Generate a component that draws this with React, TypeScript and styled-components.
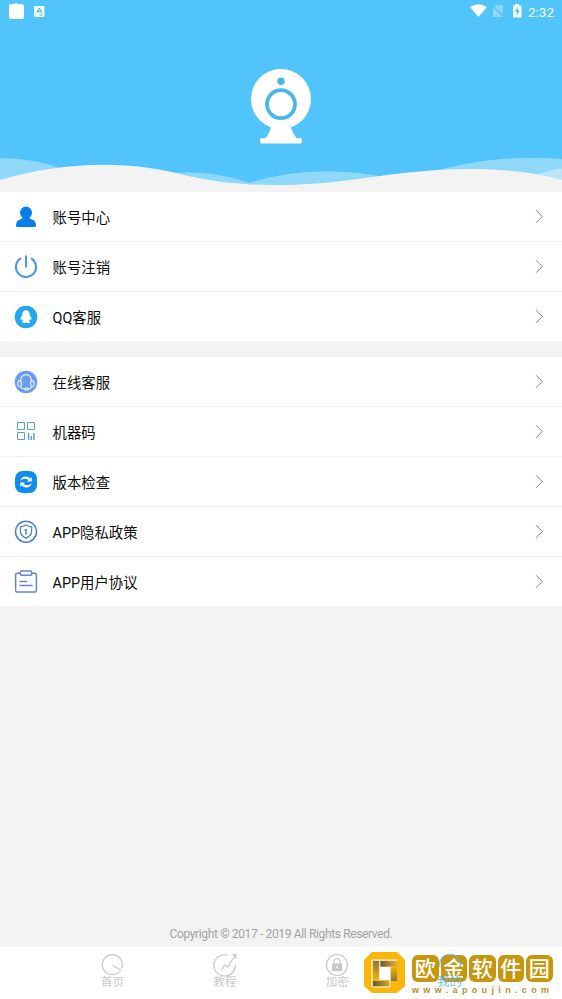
import React from "react";
import styled, { createGlobalStyle } from "styled-components";

const GlobalStyle = createGlobalStyle`
  * { box-sizing: border-box; }
  body { margin: 0; background: #f3f3f3; }
`;

const Screen = styled.div`
  width: 562px;
  height: 999px;
  display: flex;
  flex-direction: column;
  overflow: hidden;
  background: #f3f3f3;
  color: #0c0c0c;
  font-family: Roboto, "Noto Sans CJK SC", sans-serif;
`;

const Header = styled.header`
  position: relative;
  height: 192px;
  flex: none;
  display: flex;
  flex-direction: column;
  align-items: center;
  background: #50c4fb;
`;

const StatusBar = styled.div`
  width: 100%;
  height: 24px;
  display: flex;
  justify-content: space-between;
  padding: 0 8px;
`;

const StatusGroup = styled.div`
  display: flex;
  align-items: flex-start;
`;

const Clock = styled.span`
  width: 26px;
  margin-left: 4px;
  color: #f2fbff;
  font-size: 13.5px;
  line-height: 24px;
  white-space: nowrap;
`;

const Camera = styled.svg`
  margin-top: 44px;
  width: 62px;
  height: 77px;
`;

const Waves = styled.svg`
  position: absolute;
  left: 0;
  bottom: 0;
`;

const Group = styled.section`
  flex: none;
  margin-bottom: 15px;
  background: #fff;
`;

const Row = styled.div`
  height: 50px;
  display: flex;
  align-items: center;
  padding: 0 17px 0 14px;
  border-bottom: 1px solid #f0f0f0;

  &:last-child {
    border-bottom-color: #f5f5f5;
  }
`;

const RowIcon = styled.svg`
  width: 24px;
  height: 24px;
  flex: none;
`;

const Label = styled.span`
  flex: 1;
  margin-left: 14.5px;
  padding-top: 4px;
  font-size: 14.4px;
  line-height: 22px;
`;

const Copyright = styled.p`
  margin: auto 0 0;
  height: 25px;
  color: #a2a2a2;
  font-size: 12px;
  line-height: 27px;
  letter-spacing: -0.36px;
  text-align: center;
`;

const TabBar = styled.nav`
  position: relative;
  flex: none;
  height: 53px;
  display: flex;
  padding: 0 56.2px;
  background: #fff;
  border-top: 1px solid #f7f7f7;
`;

const Tab = styled.div<{ $active?: boolean }>`
  flex: 1;
  display: flex;
  flex-direction: column;
  align-items: center;
  padding-top: 6px;
  color: ${(p) => (p.$active ? "#50b9e8" : "#c8c8c8")};
  font-size: ${(p) => (p.$active ? 12.5 : 11.5)}px;
  line-height: 14px;
`;

const TabIcon = styled.svg`
  width: 24px;
  height: 24px;
  flex: none;
  margin-bottom: -2px;
`;

const Watermark = styled.div`
  position: absolute;
  left: 363px;
  top: 4px;
  display: flex;
`;

const Brand = styled.div`
  margin-left: 6px;
  padding-top: 4px;
`;

const Tiles = styled.div`
  display: flex;
  gap: 2px;
`;

const Tile = styled.span`
  width: 26.5px;
  height: 27px;
  border-radius: 6px;
  background: #c7960c;
  color: #fff;
  font-family: "Noto Sans CJK SC", sans-serif;
  font-size: 21px;
  font-weight: 500;
  line-height: 25px;
  text-align: center;
`;

const ActiveOverlay = styled.div`
  position: absolute;
  left: 393.4px;
  top: 0;
  width: 112.4px;
  display: flex;
  opacity: 0.85;
`;

const Url = styled.div`
  margin-top: 2px;
  color: #b59230;
  font-family: "Liberation Sans", sans-serif;
  font-size: 9px;
  font-weight: bold;
  line-height: 12px;
  letter-spacing: 4.35px;
  white-space: nowrap;
`;

const icons: Record<string, React.ReactNode> = {
  account: (
    <g fill="#087df0">
      <ellipse cx="12" cy="7.7" rx="6" ry="6.1" />
      <path d="M9 11h6c.2 2.3 1.4 3 3.5 3.7 2.5.8 3.3 3 3.5 5.5.1 1.2-.5 1.8-1.5 1.8h-17c-1 0-1.6-.6-1.5-1.8.2-2.5 1-4.7 3.5-5.5C7.6 14 8.8 13.3 9 11Z" />
    </g>
  ),
  power: (
    <g fill="none" stroke="#5295e0" strokeWidth="2.1" strokeLinecap="round">
      <path d="M6.3 3.6a10.1 10.1 0 1 0 11.4 0M12 1.2V11.8" />
    </g>
  ),
  qq: (
    <>
      <circle cx="12" cy="12" r="11.3" fill="#25a7ee" />
      <path fill="#fff" d="M12 5.2c-2.5 0-3.7 1.7-3.6 4 0 1.3-1.9 3-1.9 5 .1 1 .9.7 1.4-.1.2.8.6 1.5 1.1 2-.6.3-1.1.8-1 1.3.3.9 2.900.8 4 .1 1.1.7 3.7.8 4-.1.1-.5-.4-1-1-1.300.5-.5.9-1.200 1.100-2 .5.8 1.300 1.100 1.400.1 0-2-1.900-3.700-1.900-5 .1-2.300-1.100-4-3.600-4Z" />
    </>
  ),
  support: (
    <>
      <circle cx="12" cy="12" r="11.3" fill="#6a9df0" />
      <g fill="none" stroke="#e8f2ff" strokeWidth="1.2" strokeLinecap="round">
        <path d="M6.5 11V10.500a5.500 5.800 0 0 1 11 0v.5" />
        <rect x="4" y="10.8" width="3.3" height="5.7" rx="1.5" />
        <rect x="16.7" y="10.8" width="3.3" height="5.7" rx="1.5" />
        <path d="M18 16.8c-.7 1.2-1.8 2-3.5 2.3M6.5 17c1 1.3 2.5 2 4.500 2.200" />
        <rect x="10.7" y="18" width="3.6" height="1.9" rx=".9" />
      </g>
    </>
  ),
  code: (
    <g fill="none" stroke="#58a0d6">
      <path d="M3.5 2.500h7v7h-7ZM13.500 2.500h7v7h-7ZM3.500 12.500h7v7h-7Z" strokeWidth="1" />
      <path d="M14.600 13v7M17.300 16v4M19.900 13v7" strokeWidth="1.500" />
    </g>
  ),
  update: (
    <>
      <path fill="#108cea" d="M12 .8c8.600 0 11.100 2.600 11.100 11.200S20.600 23.200 12 23.200.9 20.600.9 12 3.400.8 12 .8Z" />
      <path fill="#fff" d="M6.3 10.7c.7-2.9 3-4.2 5.5-4.2 1.8 0 3.2.7 4.2 2l1.900-1.200-.3 4.200h-4.700l1.500-1.500c-1.900-1.700-5.300-1.600-8.100.7ZM17.700 13.300c-.7 2.900-3 4.200-5.500 4.200-1.800 0-3.200-.7-4.200-2l-1.900 1.200.3-4.200h4.700L9.600 14c1.900 1.700 5.300 1.600 8.100-.7Z" />
    </>
  ),
  privacy: (
    <g fill="none" stroke="#4f82c8" strokeWidth="1.5">
      <circle cx="12" cy="11.7" r="10.5" />
      <path d="M12 5c1.800 1.200 3.500 1.700 5.600 1.800v4.400c0 3.300-2 5.300-5.600 7-3.600-1.700-5.600-3.700-5.600-7V6.800c2.100-.1 3.800-.6 5.600-1.800Z" strokeWidth="1.3" />
      <path d="M12 9v5.500M10.500 10h2.100" />
    </g>
  ),
  terms: (
    <g fill="none" stroke="#6685ce" strokeWidth="1.5">
      <path d="M6.500 3.200H3.300c-1 0-1.700.6-1.700 1.600v15.600c0 1 .7 1.700 1.700 1.700h17.400c1 0 1.700-.7 1.700-1.700V4.800c0-1-.7-1.600-1.700-1.600h-3.200" />
      <rect x="6.3" y="1" width="11.4" height="4.3" rx="1.2" />
      <path d="M5.500 11.500h7.700M5.500 15.500h13" strokeWidth="1.4" />
    </g>
  ),
};

const groups = [
  [["account", "账号中心"], ["power", "账号注销"], ["qq", "QQ客服"]],
  [["support", "在线客服"], ["code", "机器码"], ["update", "版本检查"], ["privacy", "APP隐私政策"], ["terms", "APP用户协议"]],
];

const tabs: { label: string; icon: React.ReactNode }[] = [
  { label: "首页", icon: <path d="M12.5 12.5 20.5 16.8M21.5 15.5A10 10 0 1 0 20.7 17" /> },
  {
    label: "教程",
    icon: <path d="M14.8 2.1A10.7 10.7 0 1 0 22.300 11.500M8.500 17l3-5 3 2L22.800 1.700M18.800 1.700h4v4" />,
  },
  {
    label: "加密",
    icon: (
      <>
        <circle cx="12" cy="12" r="10.5" />
        <path d="M9 11V8.700c0-4 6-4 6 0V11" />
        <rect x="7.500" y="11" width="9" height="6.500" fill="currentColor" />
        <path d="M12 13v2.500" stroke="#fff" />
      </>
    ),
  },
];

const Chevron = () => (
  <svg width="12" height="16" viewBox="0 0 12 16" fill="none" stroke="#858585" strokeWidth="1">
    <path d="m3 1.2 6.300 6.300L3 13.800" />
  </svg>
);

export default function App() {
  return (
    <>
      <GlobalStyle />
      <Screen>
        <Header>
          <StatusBar>
            <StatusGroup>
              <svg width="44" height="24">
                <path d="M2.500 4h3q2.500-1.400 5 0h3q2.500 0 2.500 2v11q0 2-2 2H3q-2 0-2-2V6q0-2 1.500-2Z" fill="#fff" />
                <rect x="26" y="6" width="10.500" height="11" rx="1" fill="#eefaff" />
                <path d="m28.800 13 2.500-5 2.500 5m-4.100-1.600h3.200M31.500 15h3" fill="none" stroke="#50aed8" />
              </svg>
            </StatusGroup>
            <StatusGroup>
              <svg width="54" height="24">
                <path d="M0 7q8.500-5.500 17 0l-8.500 10Z" fill="#fff" />
                <path d="M23 6.500 26 5h7v12H23Z" fill="#8cd7fa" />
                <path d="m22 5 12 12" stroke="#50c4fb" strokeWidth="1.500" />
                <path d="M43 5.500h2V4h4v1.500h2.500V17.500H43Z" fill="#f2fbff" />
                <path d="m48 7-3 4.500h2l-.5 4 3-5h-2Z" fill="#50aed8" />
              </svg>
              <Clock>2:32</Clock>
            </StatusGroup>
          </StatusBar>
          <Camera viewBox="0 0 62 77">
            <circle cx="31" cy="31" r="30" fill="#fff" />
            <path d="M22 55h18c1 6 3 11 6.500 15H50q2 0 2 2v1.500q0 2-2 2H12q-2 0-2-2V72q0-2 2-2h3.500C19 66 21 61 22 55Z" fill="#fff" />
            <circle cx="31" cy="13.200" r="3.700" fill="#4bb7e7" />
            <circle cx="31" cy="36.200" r="14" fill="none" stroke="#4bb7e7" strokeWidth="3.800" />
          </Camera>
          <Waves width="562" height="47" viewBox="0 145 562 47">
            <g fill="#90d8f9">
              <path d="M0 158Q33 158 63 169L60 192H0Z" />
              <path d="M160 175Q201 167 250 183V190H160Z" />
              <path d="M245 184Q313 162 390 178V190H245Z" />
              <path d="M420 176Q486 153 562 159V192H420Z" />
            </g>
            <path d="M530 177Q548 170 562 168.500V192H530Z" fill="#bce4f6" />
            <path d="M0 180C67 160 134 161 184 175C255 192 326 184 376 176.500C450 166 510 166 562 180V192H0Z" fill="#f3f3f3" />
          </Waves>
        </Header>
        {groups.map((rows, index) => (
          <Group key={index}>
            {rows.map(([icon, label]) => (
              <Row key={icon}>
                <RowIcon viewBox="0 0 24 24">{icons[icon]}</RowIcon>
                <Label>{label}</Label>
                <Chevron />
              </Row>
            ))}
          </Group>
        ))}
        <Copyright>Copyright © 2017 - 2019 All Rights Reserved.</Copyright>
        <TabBar>
          {tabs.map(({ label, icon }) => (
            <Tab key={label}>
              <TabIcon viewBox="0 0 24 24" fill="none" stroke="currentColor" strokeWidth="1.2">{icon}</TabIcon>
              {label}
            </Tab>
          ))}
          <Tab />
          <Watermark>
            <svg width="43" height="45" viewBox="0 0 43 45">
              <defs>
                <linearGradient id="fadeRight">
                  <stop stopColor="#5f583f" />
                  <stop offset="1" stopColor="#e5b33a" />
                </linearGradient>
                <linearGradient id="fadeLeft" x1="1" x2="0">
                  <stop stopColor="#dba92f" />
                  <stop offset="1" stopColor="#5f583f" />
                </linearGradient>
                <linearGradient id="fadeDown" x1="0" y1="0" x2="0" y2="1">
                  <stop stopColor="#8a7640" />
                  <stop offset="1" stopColor="#fbb60b" />
                </linearGradient>
                <linearGradient id="fadeUp" x1="0" y1="1" x2="0" y2="0">
                  <stop stopColor="#8a7640" />
                  <stop offset="1" stopColor="#fbb60b" />
                </linearGradient>
              </defs>
              <path fill="#fbb60b" fillRule="evenodd" d="M9 1h25l8 8v26l-8 7H9l-8-7V9ZM17 16v13h10V16Z" />
              <path d="M10 10h6.500v20H10Z" fill="url(#fadeDown)" />
              <path d="M17 10h17v5.500H17Z" fill="url(#fadeRight)" />
              <path d="M27.500 15h6.500v15h-6.500Z" fill="url(#fadeUp)" />
              <path d="M10 30h17v5.500H10Z" fill="url(#fadeLeft)" />
              <path d="M9 36V9h25.500M16.800 29.500V9.500M27 15.500V36H9.500" fill="none" stroke="#fff" strokeWidth="1" />
            </svg>
            <Brand>
              <Tiles>{[..."欧金软件园"].map((char) => <Tile key={char}>{char}</Tile>)}</Tiles>
              <Url>www.apoujin.com</Url>
            </Brand>
          </Watermark>
          <ActiveOverlay>
            <Tab $active>
              <TabIcon viewBox="0 0 24 24" fill="none" stroke="currentColor" strokeWidth="1.2">
                <path d="M2 14a10.300 10.300 0 1 1 20 0" />
              </TabIcon>
              我的
            </Tab>
          </ActiveOverlay>
        </TabBar>
      </Screen>
    </>
  );
}
